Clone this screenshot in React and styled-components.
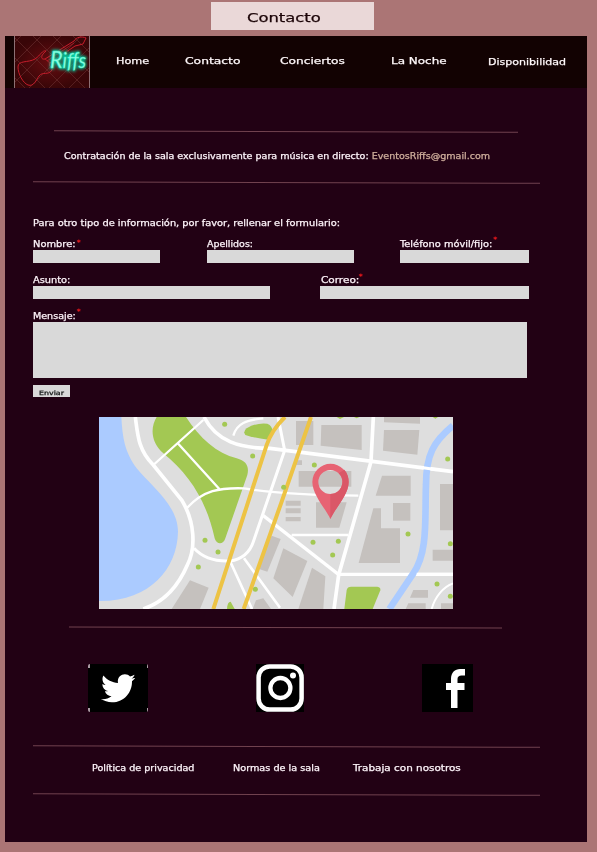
import React, { useLayoutEffect, useRef, useState } from "react";
import styled, { createGlobalStyle } from "styled-components";
import { FaTwitter } from "react-icons/fa";

const Global = createGlobalStyle`
  *, *::before, *::after { box-sizing: border-box; }
  body {
    margin: 0;
    background: #ab7575;
    font-family: "DejaVu Sans", Verdana, sans-serif;
    color: #fdf3f9;
  }
`;

const Page = styled.div`
  width: 597px;
  height: 852px;
  padding: 2px 10px 0 5px;
  background: #ab7575;
  overflow: hidden;
`;

const Title = styled.h1`
  display: flex;
  align-items: center;
  width: 163px;
  height: 28px;
  margin: 0 0 6px 206px;
  padding: 2px 0 0 36px;
  background: #ead8d8;
  color: #1c0508;
  font-weight: 400;
`;

const Screen = styled.main`
  height: 806px;
  background: #220114;
`;

const Header = styled.header`
  display: flex;
  height: 52px;
  margin-bottom: 42.5px;
  padding-left: 9px;
  background: #120202;
`;

const Logo = styled.svg`
  display: block;
  flex: none;
  width: 76px;
  height: 52px;
`;

const Nav = styled.nav`
  display: grid;
  grid-template-columns: 69px 95px 111px 97px 78px;
  padding: 17px 0 0 26px;
`;

const NavLink = styled.a`
  display: block;
  padding-top: ${(p) => (p.$drop ? "1px" : "0")};
  color: #fff8fa;
`;

const FitBox = styled.span`
  display: block;
  flex: none;
  width: ${(p) => p.$width}px;
  height: ${(p) => p.$line}px;
  font-size: ${(p) => p.$size}px;
  line-height: ${(p) => p.$line}px;
  white-space: nowrap;
`;

const FitInner = styled.span`
  display: inline-block;
  padding-top: 1px;
  vertical-align: top;
  transform-origin: 0 50%;
  -webkit-text-stroke: 0.25px currentColor;
`;

/* Extended lettering: widens its text to fill the given width. */
function Wide({ width, size = 8, line = 12, children }) {
  const ref = useRef(null);
  const [scale, setScale] = useState(1);
  useLayoutEffect(() => {
    setScale(width / ref.current.offsetWidth);
  }, [width]);
  return (
    <FitBox $width={width} $size={size} $line={line}>
      <FitInner ref={ref} style={{ transform: `scaleX(${scale})` }}>
        {children}
      </FitInner>
    </FitBox>
  );
}

const Rule = styled.div`
  width: ${(p) => p.$width}px;
  height: 1px;
  margin-left: ${(p) => p.$left}px;
  background: #71424f;
  transform: rotate(${(p) => p.$tilt || 0.18}deg);
`;

const Notice = styled.p`
  margin: 18.5px 0 20px 58.5px;
`;

const Mail = styled.a`
  color: #cfae9c;
`;

const Form = styled.form`
  width: 496px;
  margin: 34px 0 0 28px;
`;

const FieldRow = styled.div`
  display: grid;
  grid-template-columns: ${(p) => p.$columns};
  margin-top: ${(p) => p.$top}px;
`;

const Field = styled.label`
  display: block;
`;

const Caption = styled.span`
  display: flex;
  height: 12px;
  gap: ${(p) => p.$gap || 2}px;
  padding-left: ${(p) => p.$indent || 0}px;
`;

const Required = styled.span`
  color: #e81a1c;
  font-size: 7.5px;
  font-weight: 700;
  line-height: 12px;
  margin-top: ${(p) => p.$top || 0}px;
`;

const Input = styled.input`
  display: block;
  width: ${(p) => p.$width}px;
  height: 13px;
  margin: 0;
  padding: 0 3px;
  border: 0;
  border-radius: 0;
  background: #d9d9d9;
  font-size: 8px;
`;

const Message = styled.textarea`
  display: block;
  width: 494px;
  height: 56px;
  margin: 0;
  padding: 3px;
  border: 0;
  background: #d9d9d9;
  resize: none;
`;

const Send = styled.button`
  display: block;
  width: 37px;
  height: 12px;
  margin: 7px 0 0;
  padding: 0 6px;
  border: 0;
  background: #d9d9d9;
  color: #121515;
  font-family: inherit;
  text-align: left;
`;

const MapView = styled.svg`
  display: block;
  width: 354px;
  height: 192px;
  margin: 20px 0 17.5px 94px;
`;

const Social = styled.div`
  display: grid;
  grid-template-columns: 168px 166px 51px;
  margin: 36.5px 0 33.5px 83px;
`;

const Tile = styled.a`
  display: flex;
  align-items: center;
  justify-content: center;
  width: ${(p) => p.$width}px;
  height: 48px;
  background: #000;
  color: #fff;
  svg { display: block; }
`;

const CutTile = styled(Tile)`
  border-radius: 2px;
  background:
    linear-gradient(#000, #000) 1.5px 0 / calc(100% - 3px) 100% no-repeat,
    linear-gradient(#000, #000) 0 4px / 100% calc(100% - 8px) no-repeat,
    #a99ba2;
`;

const FooterLinks = styled.footer`
  display: grid;
  grid-template-columns: 141px 120px 108px;
  margin: 15.5px 0 20px 87px;
`;

function RiffsLogo() {
  return (
    <Logo viewBox="0 0 76 52">
      <defs>
        <pattern id="bricks" width="20" height="20" patternUnits="userSpaceOnUse" patternTransform="translate(3 4)">
          <path d="M0 0L20 20M20 0L0 20" stroke="#6c3030" strokeWidth="0.6" />
        </pattern>
        <radialGradient id="wall">
          <stop offset="0" stopColor="#650c10" />
          <stop offset="1" stopColor="#390608" />
        </radialGradient>
        <filter id="neon" x="-30%" y="-30%" width="160%" height="160%">
          <feGaussianBlur stdDeviation="1.5" />
        </filter>
      </defs>
      <rect width="76" height="52" fill="url(#wall)" />
      <rect width="76" height="52" fill="url(#bricks)" />
      <path d="M0.5 0V52M75.5 0V52" stroke="#8c7074" />
      <g fill="none" stroke="#c51d2b" strokeWidth="1" strokeLinejoin="round">
        <path d="M32 15C28 14 27 19 21 23C14 27 4 24 4 31C4 38 9 47 14 49C20 51 22 44 25 40C29 35 34 40 38 34C39 31 34 31 36 27L61 10L69 8L72 2C68 0 62 1 60 5L31 23C26 24 27 19 32 15Z" />
        <path d="M31 23L36 27M33 25L60 7" strokeWidth="0.7" />
      </g>
      <g fontFamily="Lato, sans-serif" fontStyle="italic" transform="translate(36 32) scale(0.9 1)">
        <text fill="#00c79b" stroke="#00c79b" strokeWidth="2.5" fontSize="21" filter="url(#neon)" aria-hidden="true">
          <tspan fontSize="24">R</tspan>iffs
        </text>
        <text fill="#8affe2" stroke="#2fe5bd" strokeWidth="0.3" fontSize="21">
          <tspan fontSize="24">R</tspan>iffs
        </text>
      </g>
    </Logo>
  );
}

function StreetMap() {
  return (
    <MapView viewBox="27 36 1062 576" preserveAspectRatio="none">
      <rect x="27" y="36" width="1062" height="576" fill="#dedede" />
      <path d="M27 36H94C98 100 104 140 140 190C180 240 264 300 264 380C262 490 180 590 27 588Z" fill="#abcbff" />
      <g fill="#a3c853">
        <path d="M200 36H288C330 100 380 145 440 160C470 168 478 185 472 210L406 400C400 420 380 420 374 400C350 290 300 210 220 145C180 110 182 65 200 36Z" />
        <path d="M470 70Q500 52 532 56Q548 62 548 82L535 104Q490 98 466 90Q458 80 470 70Z" />
        <path d="M411 612Q412 590 422 590L434 612Z" />
        <path d="M763 612L770 555Q772 545 784 545H862Q873 547 871 556L848 612Z" />
      </g>
      <g fill="#c5c1be">
        <path d="M300 526L356 548L330 612H245Z" />
        <path d="M545 392L572 402L532 500L500 490Z" />
        <path d="M580 430L652 468L608 576L550 520Z" />
        <path d="M666 488L706 514L700 612H625Z" />
        <path d="M498 586L520 580L543 612H488Z" />
        <path d="M618 48H670V120H618Z" />
        <path d="M694 60H815V135L692 122Z" />
        <path d="M882 36H990V56L882 52Z" />
        <path d="M882 75H988L982 149L879 137Z" />
        <path d="M626 198H784V245H626Z" />
        <path d="M876 212H962V272H857Z" />
        <path d="M909 294H961V347H909Z" />
        <path d="M850 310H873V370H930V474H806Z" />
        <path d="M678 292H770L748 368H678Z" />
        <path d="M587 287H632V302H587ZM587 310H632V325H587ZM587 336H632V349H587Z" />
        <path d="M1050 237H1089V376H1050ZM1028 434H1089V467H1028Z" />
        <path d="M970 555H1014V578H960ZM955 595H1007V612H947ZM1053 595H1089V612H1053Z" />
        <path d="M554 520L572 490V538Z" />
        <path d="M618 166H636V180H614Z" />
      </g>
      <g fill="none" stroke="#fff">
        <path d="M136 36C143 90 145 135 190 180L275 285C315 350 318 430 292 480C260 555 210 595 160 612" strokeWidth="11" />
        <path d="M342 36C380 110 450 130 540 130L1089 200" strokeWidth="11" />
        <path d="M190 180L340 45M262 113L388 252M290 310C340 255 390 248 460 250C500 255 560 270 805 272" strokeWidth="7" />
        <path d="M312 430C340 460 380 470 420 468C460 462 480 440 490 410L584 136L564 36" strokeWidth="9" />
        <path d="M420 468L486 612M462 460L570 608" strokeWidth="8" />
        <path d="M520 332L745 508H1089" strokeWidth="10" />
        <path d="M850 36L843 170L746 510L732 612" strokeWidth="11" />
        <path d="M605 390H775M430 92C440 55 470 45 520 40" strokeWidth="7" />
        <path d="M1025 612C1035 575 1060 545 1089 535" strokeWidth="6" />
      </g>
      <path d="M1089 62C1030 110 1008 150 1008 240C1004 340 1015 440 970 505L898 612" fill="none" stroke="#abcbff" strokeWidth="20" />
      <path d="M980 508H1089M990 187L1040 194" fill="none" stroke="#fff" strokeWidth="9" />
      <g fill="none" stroke="#edc344" strokeWidth="12">
        <path d="M370 612L530 120Q545 75 585 36" />
        <path d="M461 612L575 290L663 36" />
      </g>
      <g fill="#a3c853">
        {[[404, 58], [488, 153], [345, 406], [384, 441], [325, 486], [496, 553], [673, 180], [669, 412], [745, 409], [728, 450], [954, 387], [1073, 162], [1081, 416], [1041, 537], [1081, 574], [581, 247]].map(([x, y]) => (
          <circle key={`${x}-${y}`} cx={x} cy={y} r="7.5" />
        ))}
        <path d="M740 36H762L750 42ZM792 36H808L800 40ZM1028 36H1044L1036 41Z" />
      </g>
      <path fillRule="evenodd" d="M721 342C710 315 667 270 667 231A54 54 0 0 1 776 231C776 270 735 310 721 342ZM721 195A36 36 0 1 0 721 267A36 36 0 1 0 721 195Z" fill="#e76373" />
      <path d="M721 267A36 36 0 0 0 746 205L763 194C773 205 776 218 776 231C776 270 735 310 721 342Z" fill="#da5767" />
    </MapView>
  );
}

export default function App() {
  return (
    <>
      <Global />
      <Page>
        <Title><Wide width={74} size={12.2} line={18}>Contacto</Wide></Title>
        <Screen>
          <Header>
            <RiffsLogo />
            <Nav>
              <NavLink><Wide width={33} size={9.2} line={13}>Home</Wide></NavLink>
              <NavLink><Wide width={55} size={9.2} line={13}>Contacto</Wide></NavLink>
              <NavLink><Wide width={65} size={9.2} line={13}>Conciertos</Wide></NavLink>
              <NavLink><Wide width={56} size={9.2} line={13}>La Noche</Wide></NavLink>
              <NavLink $drop><Wide width={78} size={9.2} line={13}>Disponibilidad</Wide></NavLink>
            </Nav>
          </Header>

          <Rule $width={464} $left={49} />
          <Notice>
            <Wide width={426}>
              Contratación de la sala exclusivamente para música en directo: <Mail>EventosRiffs@gmail.com</Mail>
            </Wide>
          </Notice>
          <Rule $width={507} $left={28} />

          <Form onSubmit={(e) => e.preventDefault()}>
            <Wide width={307}>Para otro tipo de información, por favor, rellenar el formulario:</Wide>
            <FieldRow $columns="173.5px 193.5px 129px" $top={9}>
              <Field>
                <Caption $gap={1.5}><Wide width={42}>Nombre:</Wide><Required $top={-1}>*</Required></Caption>
                <Input $width={127} />
              </Field>
              <Field>
                <Caption><Wide width={46}>Apellidos:</Wide></Caption>
                <Input $width={147} />
              </Field>
              <Field>
                <Caption $gap={1}><Wide width={92}>Teléfono móvil/fijo:</Wide><Required $top={-4}>*</Required></Caption>
                <Input $width={128.5} />
              </Field>
            </FieldRow>
            <FieldRow $columns="287px 209px" $top={11}>
              <Field>
                <Caption><Wide width={38}>Asunto:</Wide></Caption>
                <Input $width={237.4} />
              </Field>
              <Field>
                <Caption $indent={0.5} $gap={0.1}><Wide width={38}>Correo:</Wide><Required $top={-3}>*</Required></Caption>
                <Input $width={208.5} />
              </Field>
            </FieldRow>
            <FieldRow $columns="496px" $top={11}>
              <Field>
                <Caption $gap={0.5}><Wide width={43}>Mensaje:</Wide><Required $top={-4}>*</Required></Caption>
                <Message />
              </Field>
            </FieldRow>
            <Send type="submit"><Wide width={25} size={6} line={9}>Enviar</Wide></Send>
          </Form>

          <StreetMap />
          <Rule $width={433} $left={64} $tilt={0.14} />

          <Social>
            <CutTile $width={60} aria-label="Twitter"><FaTwitter size={34.5} /></CutTile>
            <Tile $width={48} aria-label="Instagram">
              <svg width="48" height="48" viewBox="0 0 48 48" fill="none" stroke="#fff">
                <rect x="2.6" y="2.4" width="43" height="43.2" rx="11" strokeWidth="4.5" />
                <circle cx="24.4" cy="24" r="10" strokeWidth="4.3" />
                <circle cx="37" cy="11.4" r="3" fill="#fff" stroke="none" />
              </svg>
            </Tile>
            <Tile $width={51} aria-label="Facebook">
              <svg width="51" height="48" viewBox="0 0 51 48" fill="#fff">
                <path d="M29 44V26H24V19H29V15C29 8.5 33 5 38 5H43V11.5H39.5C37 11.5 35.5 12.8 35.5 15V19H42.5V26H35.5V44Z" />
              </svg>
            </Tile>
          </Social>

          <Rule $width={507} $left={28} />
          <FooterLinks>
            <Wide width={103}>Política de privacidad</Wide>
            <Wide width={87}>Normas de la sala</Wide>
            <Wide width={108}>Trabaja con nosotros</Wide>
          </FooterLinks>
          <Rule $width={507} $left={28} />
        </Screen>
      </Page>
    </>
  );
}
